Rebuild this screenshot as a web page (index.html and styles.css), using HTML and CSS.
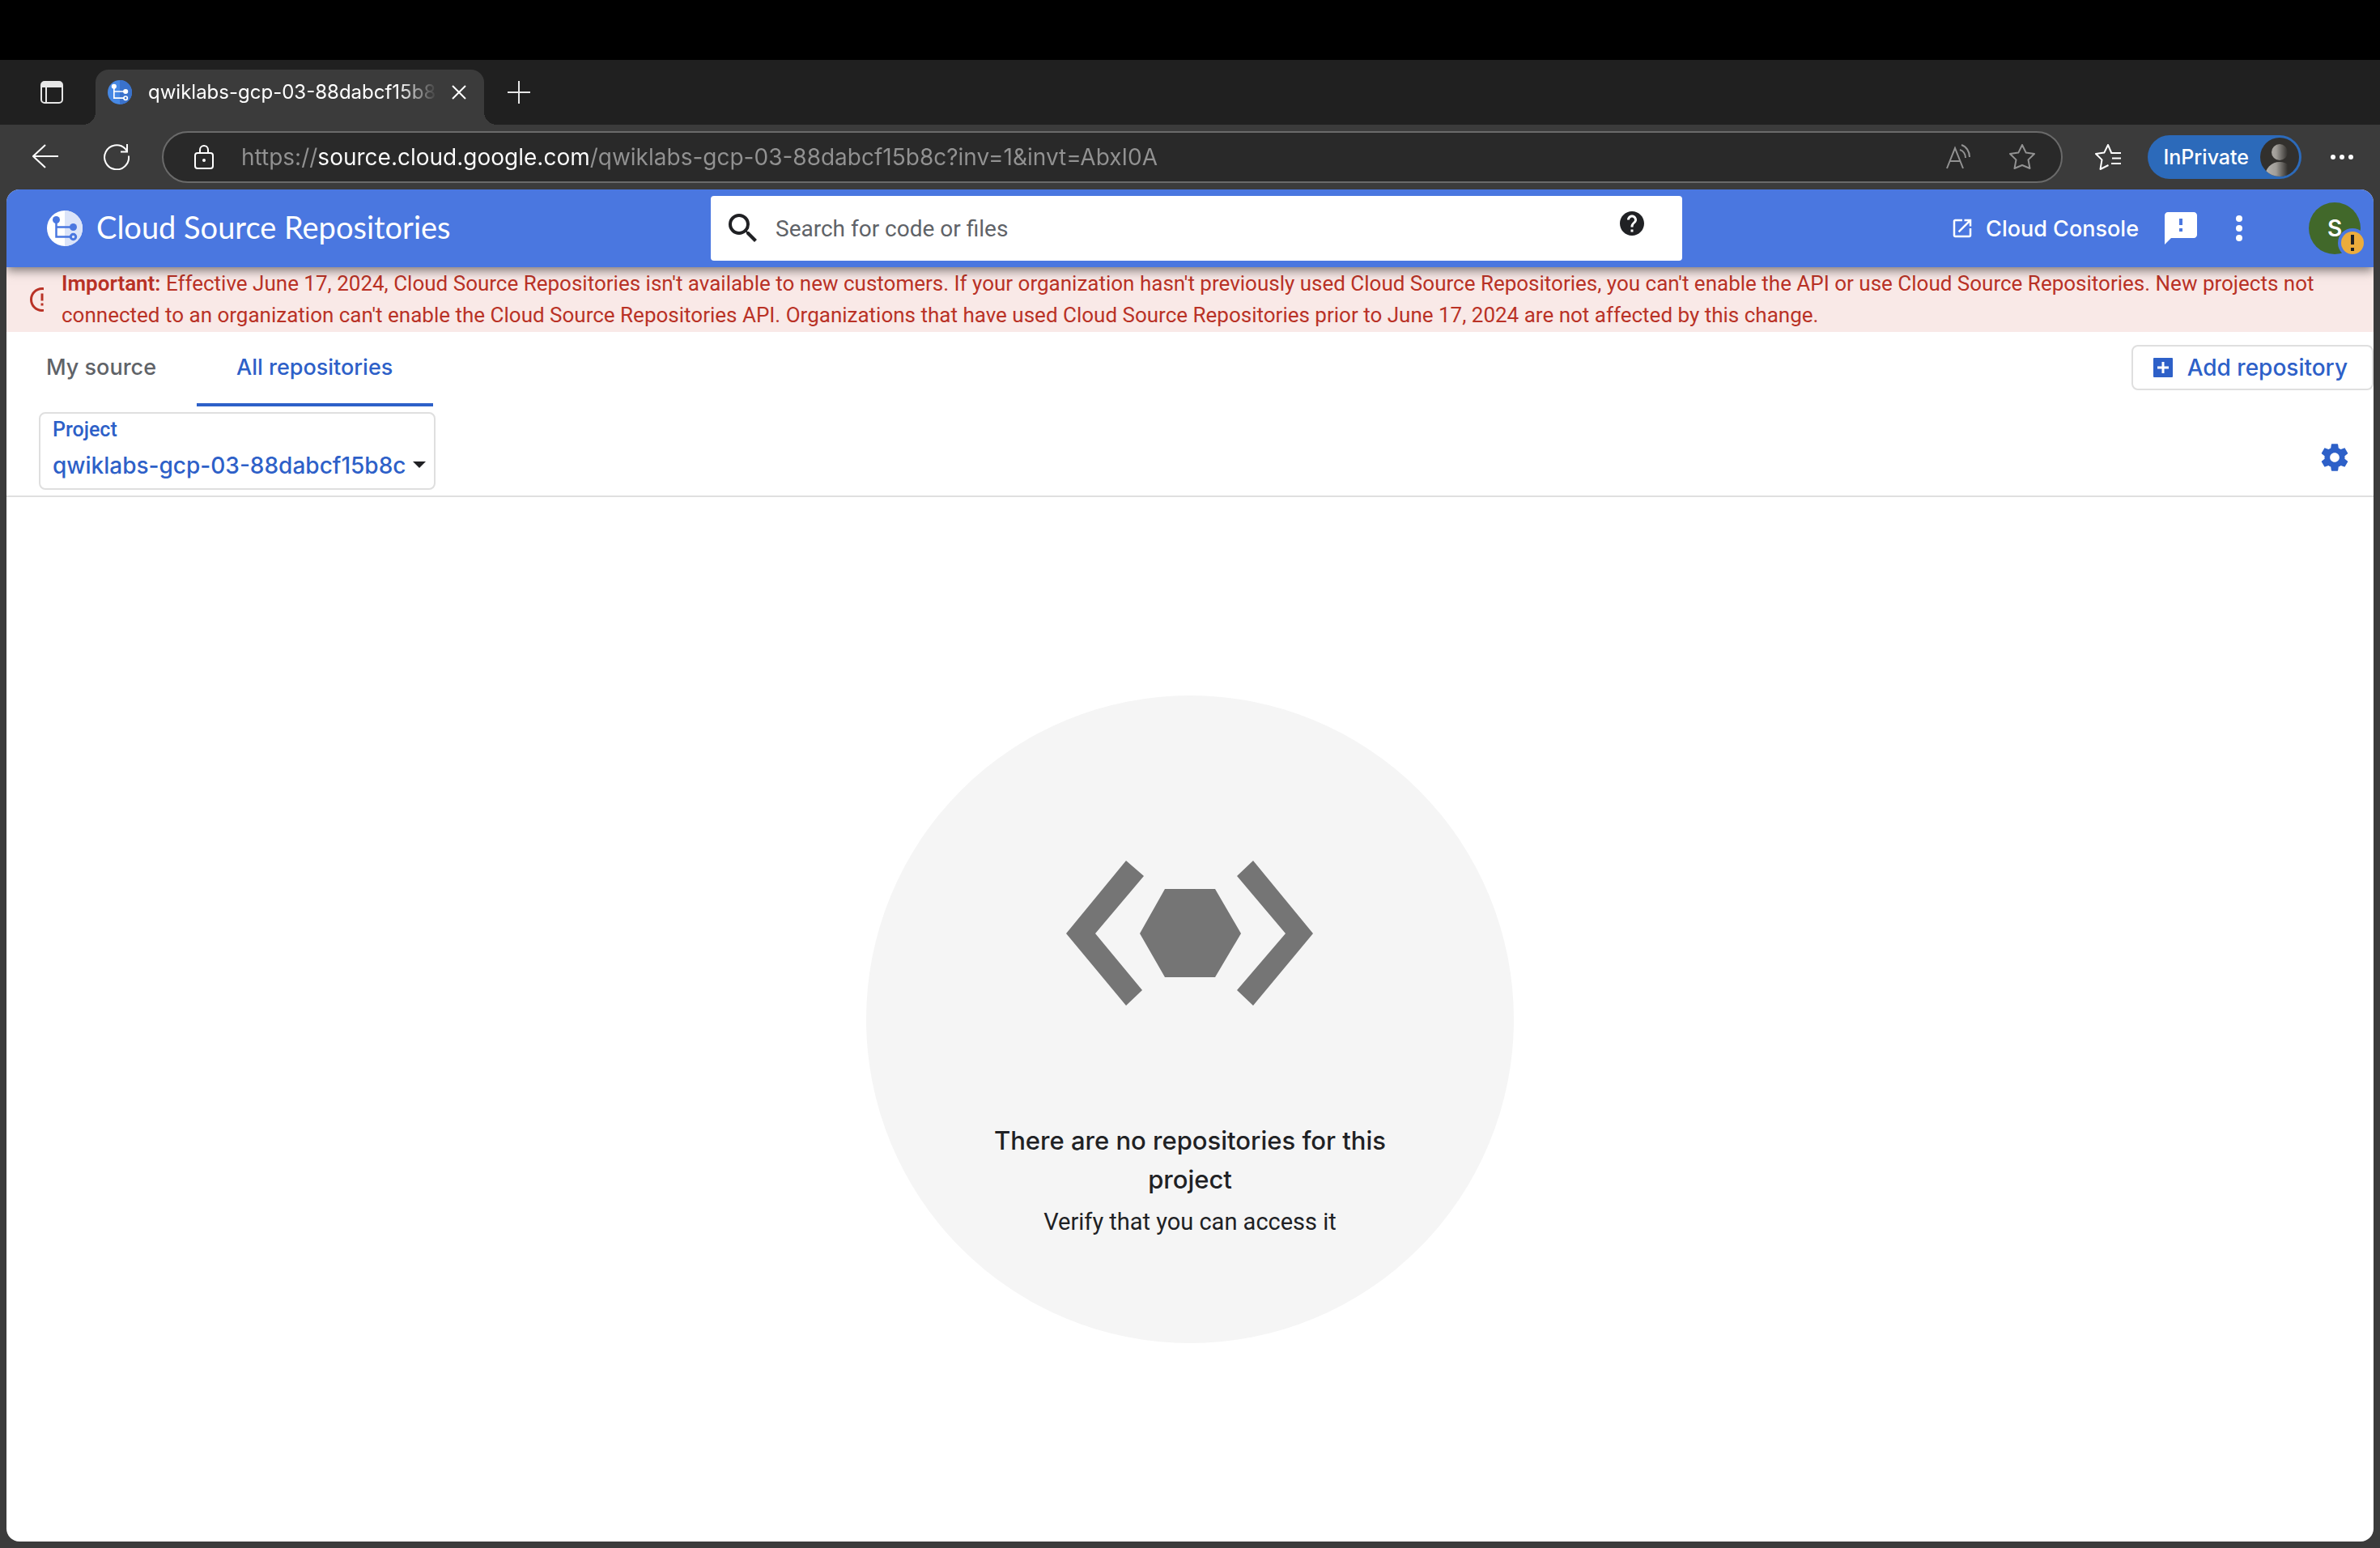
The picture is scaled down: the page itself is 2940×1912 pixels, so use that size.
FILE: index.html
```html
<!DOCTYPE html>
<html lang="en">
<head>
<meta charset="utf-8">
<title>qwiklabs-gcp-03-88dabcf15b8c</title>
<link rel="stylesheet" href="styles.css">
</head>
<body>
<div class="tabstrip">
  <button class="icon-button" type="button" aria-label="Tab actions">
    <svg width="28" height="28" viewBox="0 0 28 28"><rect x="1" y="1" width="26" height="26" rx="4" fill="none" stroke="#e6e6e6" stroke-width="2"/><path d="M1 8V5a4 4 0 0 1 4-4h18a4 4 0 0 1 4 4v3z" fill="#e6e6e6"/><path d="M7 8v19" stroke="#e6e6e6" stroke-width="2"/></svg>
  </button>
  <div class="browser-tab">
    <svg width="30" height="30" viewBox="0 0 44 44"><circle cx="22" cy="22" r="22" fill="#4688e4"/><path d="M22 0a22 22 0 0 1 0 44z" fill="#3a72cc"/><path d="M11.500 11v21.500H33M11.500 20.500H33" fill="none" stroke="#fff" stroke-width="2.500"/><circle cx="11.500" cy="11.500" r="4.500" fill="#fff"/><circle cx="32.500" cy="20.500" r="4.500" fill="#fff"/><circle cx="32.500" cy="32.500" r="3.200" fill="#3a72cc" stroke="#fff" stroke-width="2.500"/></svg>
    <span class="browser-tab-title">qwiklabs-gcp-03-88dabcf15b8c</span>
    <button class="icon-button" type="button" aria-label="Close tab">
      <svg width="18" height="18" viewBox="0 0 18 18"><path d="M1 1l16 16M17 1L1 17" stroke="#fff" stroke-width="2"/></svg>
    </button>
  </div>
  <button class="icon-button" type="button" aria-label="New tab">
    <svg width="28" height="28" viewBox="0 0 28 28"><path d="M14 0v28M0 14h28" stroke="#e6e6e6" stroke-width="2"/></svg>
  </button>
</div>

<div class="toolbar">
  <div class="toolbar-nav">
    <button class="icon-button" type="button" aria-label="Back">
      <svg width="32" height="32" viewBox="0 0 32 32"><path d="M32 15H1M16 1L1 15l15 14" fill="none" stroke="#fff" stroke-width="2"/></svg>
    </button>
    <button class="icon-button" type="button" aria-label="Refresh">
      <svg width="32" height="32" viewBox="0 0 32 32"><path d="M31 14.500A15 15 0 1 1 26.500 5.500L29 9M21 9.500h8V0" fill="none" stroke="#fff" stroke-width="2"/></svg>
    </button>
  </div>
  <div class="address">
    <svg width="24" height="30" viewBox="0 0 24 30"><rect x="1" y="10" width="22" height="19" rx="3" fill="none" stroke="#fff" stroke-width="2"/><path d="M7 10V6a5 5 0 0 1 10 0v4" fill="none" stroke="#fff" stroke-width="2"/><circle cx="12" cy="19" r="2" fill="#fff"/></svg>
    <input class="address-input" type="text" aria-label="Address" value="https://source.cloud.google.com/qwiklabs-gcp-03-88dabcf15b8c?inv=1&amp;invt=AbxI0A">
    <button class="icon-button" type="button" aria-label="Read aloud">
      <svg width="32" height="32" viewBox="0 0 32 32"><path d="M1 30L11 5l10 25M4.500 21h13M17 7c4 1 7 5 7 10M19 1c6 2 10 8 10 15" fill="none" stroke="#929292" stroke-width="2"/></svg>
    </button>
    <button class="icon-button" type="button" aria-label="Add to favorites">
      <svg width="32" height="32" viewBox="0 0 32 32"><path d="M16 1l4.700 9.600L31 12l-7.500 7.400L25.500 30 16 26l-9.500 4 2-10.600L1 12l10.300-1.400z" fill="none" stroke="#929292" stroke-width="2" stroke-linejoin="round"/></svg>
    </button>
  </div>
  <div class="toolbar-end">
    <button class="icon-button" type="button" aria-label="Favorites">
      <svg width="32" height="32" viewBox="0 0 32 32"><path d="M20.500 11.500L16 1l-4.700 9.600L1 12l7.500 7.400L6.500 31l10-5M20 11h12M21 17.500h11M20 24h12" fill="none" stroke="#fff" stroke-width="2" stroke-linejoin="round"/></svg>
    </button>
    <button class="inprivate" type="button">InPrivate
      <svg width="48" height="48" viewBox="0 0 48 48"><defs><linearGradient id="person" gradientUnits="userSpaceOnUse" x1="8" y1="0" x2="34" y2="0"><stop offset="0" stop-color="#b4b1ac"/><stop offset=".45" stop-color="#a09d98"/><stop offset="1" stop-color="#32302d"/></linearGradient><clipPath id="disc"><circle cx="24" cy="24" r="24"/></clipPath></defs><g clip-path="url(#disc)"><path d="M0 0h48v48H0z" fill="#32302d"/><circle cx="24" cy="18" r="10" fill="url(#person)"/><ellipse cx="24" cy="48" rx="18" ry="18" fill="url(#person)"/></g></svg>
    </button>
    <button class="icon-button" type="button" aria-label="Settings and more">
      <svg width="28" height="8" viewBox="0 0 28 8"><g fill="#fff"><circle cx="3" cy="4" r="3"/><circle cx="14" cy="4" r="3"/><circle cx="25" cy="4" r="3"/></g></svg>
    </button>
  </div>
</div>

<div class="page">
  <header class="header">
    <a class="brand" href="#">
      <svg width="44" height="44" viewBox="0 0 44 44"><circle cx="22" cy="22" r="22" fill="#fff"/><path d="M22 0a22 22 0 0 1 0 44z" fill="#dbe4f9"/><path d="M11.500 11v21.500H33M11.500 20.500H33" fill="none" stroke="#4a77e0" stroke-width="2.500"/><circle cx="11.500" cy="11.500" r="4.500" fill="#4a77e0"/><circle cx="32.500" cy="20.500" r="4.500" fill="#4a77e0"/><circle cx="32.500" cy="32.500" r="3.200" fill="#dbe4f9" stroke="#4a77e0" stroke-width="3"/></svg>
      <span class="brand-name">Cloud Source Repositories</span>
    </a>
    <div class="search">
      <svg width="48" height="48" viewBox="0 0 24 24"><path d="M15.500 14h-.79l-.28-.27A6.471 6.471 0 0 0 16 9.500 6.500 6.500 0 1 0 9.500 16c1.610 0 3.090-.59 4.230-1.570l.27.28v.79l5 4.990L20.490 19l-4.990-5zm-6 0C7.010 14 5 11.990 5 9.500S7.010 5 9.500 5 14 7.010 14 9.500 11.990 14 9.500 14z" fill="#202124"/></svg>
      <input class="search-input" type="search" placeholder="Search for code or files" aria-label="Search for code or files">
      <button class="icon-button search-help" type="button" aria-label="Search help">
        <svg width="36" height="36" viewBox="0 0 24 24"><path d="M12 2C6.480 2 2 6.480 2 12s4.480 10 10 10 10-4.480 10-10S17.520 2 12 2zm1 17h-2v-2h2v2zm2.070-7.750l-.9.920C13.450 12.900 13 13.500 13 15h-2v-.5c0-1.100.45-2.100 1.170-2.830l1.240-1.260c.37-.36.59-.86.59-1.410 0-1.100-.9-2-2-2s-2 .9-2 2H8c0-2.210 1.790-4 4-4s4 1.790 4 4c0 .88-.36 1.680-.93 2.250z" fill="#202124"/></svg>
      </button>
    </div>
    <div class="header-actions">
      <a class="console-link" href="#">
        <svg width="30" height="30" viewBox="0 0 24 24"><path d="M19 19H5V5h7V3H5c-1.110 0-2 .9-2 2v14c0 1.100.89 2 2 2h14c1.100 0 2-.9 2-2v-7h-2v7zM14 3v2h3.590l-9.830 9.830 1.410 1.410L19 6.410V10h2V3h-7z" fill="#fff"/></svg>
        Cloud Console
      </a>
      <button class="icon-button" type="button" aria-label="Send feedback">
        <svg width="48" height="48" viewBox="0 0 24 24"><path d="M20 2H4c-1.100 0-1.990.9-1.990 2L2 22l4-4h14c1.100 0 2-.9 2-2V4c0-1.100-.9-2-2-2zm-7 12h-2v-2h2v2zm0-4h-2V6h2v4z" fill="#fff"/></svg>
      </button>
      <button class="icon-button" type="button" aria-label="More options">
        <svg width="48" height="48" viewBox="0 0 24 24"><g fill="#fff"><circle cx="12" cy="6" r="2"/><circle cx="12" cy="12" r="2"/><circle cx="12" cy="18" r="2"/></g></svg>
      </button>
      <button class="account" type="button" aria-label="Account, attention needed">S
        <svg class="account-badge" width="36" height="36" viewBox="0 0 36 36"><circle cx="18" cy="18" r="18" fill="#4a77e0"/><circle cx="18" cy="18" r="14" fill="#ecac3c"/><path d="M16 8h4v12h-4zM16 24h4v4h-4z" fill="#202124"/></svg>
      </button>
    </div>
  </header>

  <div class="notice" role="alert">
    <span class="notice-icon"><svg width="36" height="36" viewBox="0 0 24 24"><path d="M11 15h2v2h-2zm0-8h2v6h-2zm.99-5C6.470 2 2 6.480 2 12s4.470 10 9.990 10C17.520 22 22 17.520 22 12S17.520 2 11.990 2zM12 20c-4.420 0-8-3.580-8-8s3.580-8 8-8 8 3.580 8 8-3.580 8-8 8z" fill="#b93226"/></svg></span>
    <p class="notice-text"><b>Important:</b> Effective June 17, 2024, Cloud Source Repositories isn't available to new customers. If your organization hasn't previously used Cloud Source Repositories, you can't enable the API or use Cloud Source Repositories. New projects not connected to an organization can't enable the Cloud Source Repositories API. Organizations that have used Cloud Source Repositories prior to June 17, 2024 are not affected by this change.</p>
  </div>

  <div class="tab-row">
    <nav class="tabs">
      <a class="tab" href="#">My source</a>
      <a class="tab tab-active" href="#" aria-current="page">All repositories</a>
    </nav>
    <button class="add-button" type="button">
      <svg width="24" height="24" viewBox="0 0 24 24"><rect width="24" height="24" rx="1" fill="#2d60c8"/><path d="M12 5v14M5 12h14" stroke="#fff" stroke-width="3"/></svg>
      Add repository
    </button>
  </div>

  <div class="filter-row">
    <div class="project">
      <label class="project-label" for="project">Project</label>
      <select class="project-select" id="project"><option>qwiklabs-gcp-03-88dabcf15b8c</option></select>
      <svg class="project-arrow" width="16" height="8" viewBox="0 0 16 8"><path d="M0 0h16L8 8z" fill="#202124"/></svg>
    </div>
    <button class="icon-button settings" type="button" aria-label="Settings">
      <svg width="40" height="40" viewBox="0 0 24 24"><path d="M19.430 12.980c.04-.32.07-.64.07-.98s-.03-.66-.07-.98l2.110-1.650c.19-.15.24-.42.12-.64l-2-3.460c-.12-.22-.39-.3-.61-.22l-2.490 1c-.52-.4-1.080-.73-1.690-.98l-.38-2.650C14.460 2.180 14.250 2 14 2h-4c-.25 0-.46.18-.49.42l-.38 2.650c-.61.25-1.170.59-1.690.98l-2.490-1c-.23-.09-.49 0-.61.22l-2 3.460c-.13.22-.07.49.12.64l2.110 1.650c-.04.32-.07.65-.07.98s.03.66.07.98l-2.110 1.650c-.19.15-.24.42-.12.64l2 3.460c.12.22.39.3.61.22l2.490-1c.52.4 1.080.73 1.690.98l.38 2.650c.03.24.24.42.49.42h4c.25 0 .46-.18.49-.42l.38-2.650c.61-.25 1.170-.59 1.690-.98l2.490 1c.23.09.49 0 .61-.22l2-3.460c.12-.22.07-.49-.12-.64l-2.110-1.650zM12 15.500c-1.930 0-3.500-1.570-3.500-3.500s1.570-3.500 3.500-3.500 3.500 1.570 3.500 3.500-1.570 3.500-3.500 3.500z" fill="#2d60c8"/></svg>
    </button>
  </div>

  <main class="content">
    <section class="empty">
      <svg width="306" height="180" viewBox="0 0 306 180"><path d="M74 0l22 19-60 71 58 70-20 19L0 90zM231 0l-20 19 60 71-60 70 20 19 74-89zM122 35h62l32 55-32 54h-62L91 90z" fill="#757575"/></svg>
      <h1 class="empty-title">There are no repositories for this project</h1>
      <p class="empty-text">Verify that you can access it</p>
    </section>
  </main>
</div>
</body>
</html>
```
FILE: styles.css
```css
* {
  box-sizing: border-box;
}

body {
  display: flex;
  flex-direction: column;
  min-height: 100vh;
  margin: 0;
  padding: 74px 0 8px;
  background: linear-gradient(#000 74px, #3b3b3b 74px);
  font-family: Inter, "Liberation Sans", sans-serif;
  font-size: 28px;
  color: #202124;
}

svg {
  display: block;
  flex: none;
}

button,
input,
select {
  margin: 0;
  padding: 0;
  border: 0;
  background: none;
  font: inherit;
  color: inherit;
}

a {
  color: inherit;
  text-decoration: none;
}

.icon-button {
  flex: none;
}

/* Browser tab strip */
.tabstrip {
  display: flex;
  align-items: center;
  height: 80px;
  padding-left: 50px;
  background: #202020;
}

.browser-tab {
  position: relative;
  display: flex;
  align-items: center;
  align-self: flex-end;
  width: 480px;
  height: 68px;
  margin: 0 29px 0 40px;
  padding: 0 22px 12px 15px;
  border-radius: 16px 16px 0 0;
  background: #3b3b3b;
}

.browser-tab::before,
.browser-tab::after {
  content: "";
  position: absolute;
  bottom: 0;
  width: 16px;
  height: 16px;
}

.browser-tab::before {
  right: 100%;
  background: radial-gradient(circle at 0 0, #202020 16px, #3b3b3b 16px);
}

.browser-tab::after {
  left: 100%;
  background: radial-gradient(circle at 100% 0, #202020 16px, #3b3b3b 16px);
}

.browser-tab-title {
  flex: 1;
  margin: 0 18px 0 20px;
  overflow: hidden;
  white-space: nowrap;
  font-size: 24px;
  line-height: 32px;
  color: #fff;
  mask-image: linear-gradient(to left, transparent, #000 48px);
}

/* Browser toolbar */
.toolbar {
  display: flex;
  align-items: center;
  gap: 40px;
  height: 80px;
  padding: 0 33px 0 40px;
}

.toolbar-nav {
  display: flex;
  align-items: center;
  gap: 56px;
}

.address {
  display: flex;
  align-items: center;
  flex: 1;
  height: 64px;
  padding: 0 32px 0 38px;
  border: 2px solid #6a6a6a;
  border-radius: 32px;
  background: #292929;
}

.address-input {
  flex: 1;
  min-width: 0;
  height: 40px;
  margin: 0 48px 0 34px;
  outline: 0;
  background: linear-gradient(to right, #929292 94px, #fff 94px 429px, #929292 429px);
  background-clip: text;
  color: transparent;
}

.address .icon-button + .icon-button {
  margin-left: 46px;
}

.toolbar-end {
  display: flex;
  align-items: center;
}

.inprivate {
  display: flex;
  align-items: center;
  gap: 14px;
  height: 54px;
  margin: 0 36px 0 33px;
  padding: 0 3px 0 19px;
  border-radius: 27px;
  background: #2c6aba;
  font-size: 25px;
  font-weight: 500;
  color: #fff;
}

/* Page */
.page {
  display: flex;
  flex-direction: column;
  flex: 1;
  margin: 0 8px;
  overflow: hidden;
  border-radius: 16px;
  background: #fff;
}

.header {
  position: relative;
  z-index: 1;
  display: grid;
  grid-template-columns: 1fr minmax(0, 1200px) 1fr;
  align-items: center;
  height: 96px;
  padding: 0 16px 0 32px;
  background: #4a77e0;
  box-shadow: 0 4px 12px rgba(0, 0, 0, 0.5);
  color: #fff;
}

.brand {
  display: flex;
  align-items: center;
  gap: 17px;
  padding-left: 18px;
}

.brand-name {
  padding-bottom: 4px;
  font-family: Lato, sans-serif;
  font-size: 38px;
  line-height: 48px;
  white-space: nowrap;
}

.search {
  display: flex;
  align-items: center;
  height: 80px;
  padding: 0 44px 0 16px;
  border-radius: 4px;
  background: #fff;
}

.search-input {
  flex: 1;
  min-width: 0;
  height: 48px;
  margin: 0 16px;
  outline: 0;
  font-family: Roboto, sans-serif;
  color: #202124;
}

.search-input::placeholder {
  color: #5f6368;
}

.search-help {
  margin-bottom: 12px;
}

.header-actions {
  display: flex;
  align-items: center;
  justify-content: flex-end;
  gap: 24px;
}

.console-link {
  display: flex;
  align-items: center;
  gap: 14px;
  margin-right: 4px;
  font-size: 27px;
  font-weight: 500;
  white-space: nowrap;
}

.account {
  position: relative;
  flex: none;
  width: 64px;
  height: 64px;
  margin-left: 38px;
  border-radius: 32px;
  background: #41682a;
  font-weight: 600;
}

.account-badge {
  position: absolute;
  right: -8px;
  bottom: -4px;
}

.notice {
  display: flex;
  align-items: center;
  padding: 1px 32px 1px 26px;
  background: #f9e9e7;
  font-family: Roboto, sans-serif;
  font-size: 26px;
  line-height: 39px;
  color: #b93226;
}

.notice-icon {
  flex: none;
  width: 20px;
  overflow: hidden;
}

.notice-text {
  margin: 0 0 0 22px;
}

.notice-text b {
  font-weight: 600;
}

.tab-row {
  display: flex;
  justify-content: space-between;
  align-items: flex-start;
}

.tabs {
  display: flex;
  font-size: 27px;
  font-weight: 500;
  color: #5f6368;
}

.tab {
  padding: 24px 50px 24px 49px;
  border-bottom: 4px solid transparent;
  line-height: 40px;
}

.tab-active {
  border-color: #2d60c8;
  color: #2d60c8;
}

.add-button {
  display: flex;
  align-items: center;
  gap: 18px;
  height: 56px;
  margin-top: 16px;
  padding: 0 30px 0 25px;
  border: 2px solid #dfdfdf;
  border-radius: 8px;
  font-weight: 500;
  color: #2d60c8;
}

.filter-row {
  display: flex;
  justify-content: space-between;
  align-items: flex-end;
  padding: 7px 28px 7px 40px;
  border-bottom: 2px solid #dfdfdf;
}

.project {
  position: relative;
  display: flex;
  flex-direction: column;
  width: 490px;
  height: 96px;
  padding: 4px 0 0 15px;
  border: 2px solid #dfdfdf;
  border-radius: 8px;
  font-weight: 500;
  color: #2d60c8;
}

.project-label {
  font-family: Roboto, sans-serif;
  font-size: 25px;
  line-height: 32px;
}

.project-select {
  height: 56px;
  appearance: none;
}

.project-arrow {
  position: absolute;
  right: 10px;
  bottom: 25px;
  pointer-events: none;
}

.settings {
  margin-bottom: 20px;
}

.content {
  display: flex;
  flex: 1;
  align-items: center;
  justify-content: center;
}

.empty {
  display: flex;
  flex-direction: column;
  align-items: center;
  width: 800px;
  height: 800px;
  padding-top: 204px;
  border-radius: 50%;
  background: #f5f5f5;
  text-align: center;
}

.empty-title {
  width: 560px;
  margin: 142px 0 8px;
  font-size: 31px;
  font-weight: 500;
  line-height: 48px;
}

.empty-text {
  margin: 0;
  font-family: Roboto, sans-serif;
  font-size: 29px;
  line-height: 40px;
}
```
